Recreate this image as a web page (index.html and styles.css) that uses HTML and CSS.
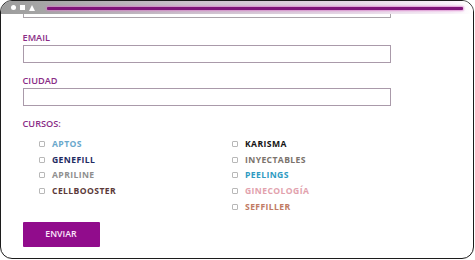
FILE: index.html
```html
<!DOCTYPE html>
<html lang="es">
<head>
<meta charset="utf-8">
<title>Formulario</title>
<link rel="stylesheet" href="styles.css">
</head>
<body>
<div class="frame">
  <div class="topbar">
    <div class="controls">
      <span class="dot"></span>
      <span class="sq"></span>
      <span class="tri"></span>
    </div>
    <div class="progress"></div>
  </div>
  <form class="form">
    <div class="cut-input"></div>
    <div class="field">
      <label class="label">EMAIL</label>
      <div class="input"></div>
    </div>
    <div class="field">
      <label class="label">CIUDAD</label>
      <div class="input"></div>
    </div>
    <div class="label cursos">CURSOS:</div>
    <div class="courses">
      <div class="col">
        <div class="course"><span class="box"></span><span class="c-aptos">APTOS</span></div>
        <div class="course"><span class="box"></span><span class="c-genefill">GENEFILL</span></div>
        <div class="course"><span class="box"></span><span class="c-apriline">APRILINE</span></div>
        <div class="course"><span class="box"></span><span class="c-cell">CELLBOOSTER</span></div>
      </div>
      <div class="col">
        <div class="course"><span class="box"></span><span class="c-karisma">KARISMA</span></div>
        <div class="course"><span class="box"></span><span class="c-iny">INYECTABLES</span></div>
        <div class="course"><span class="box"></span><span class="c-peel">PEELINGS</span></div>
        <div class="course"><span class="box"></span><span class="c-gine">GINECOLOGÍA</span></div>
        <div class="course"><span class="box"></span><span class="c-sef">SEFFILLER</span></div>
      </div>
    </div>
    <div class="button">ENVIAR</div>
  </form>
</div>
</body>
</html>
```

FILE: styles.css
```css
* { box-sizing: border-box; }
html, body { margin: 0; padding: 0; background: #ffffff; }
body { width: 475px; height: 260px; overflow: hidden; font-family: "Open Sans", "Liberation Sans", sans-serif; }

.frame {
  width: 474px;
  height: 259px;
  border: 1.5px solid #1c1c1c;
  border-radius: 12px;
  overflow: hidden;
  background: #fff;
  display: flex;
  flex-direction: column;
}

.topbar {
  height: 13px;
  flex: 0 0 13px;
  display: flex;
  align-items: center;
  background: linear-gradient(to right, #9c9c9c 0, #a6a6a6 45px, #cdc1cd 40%, #e6d8e6 75%, #f8f0f8 95%, #ffffff 100%);
}

.controls {
  display: flex;
  align-items: center;
  gap: 4px;
  padding-left: 10px;
  width: 46px;
}
.dot { width: 5px; height: 5px; border-radius: 50%; background: #fff; }
.sq { width: 5px; height: 5px; background: #fff; }
.tri {
  width: 0; height: 0;
  border-left: 3px solid transparent;
  border-right: 3px solid transparent;
  border-bottom: 6px solid #fff;
}

.progress {
  flex: 1;
  height: 3px;
  margin-right: 10px;
  margin-top: 1px;
  background: #7f1479;
  box-shadow: 0 0 2px 1px rgba(214, 120, 200, 0.75);
  border-radius: 1px;
}

.form {
  padding: 0 82px 0 21.5px;
  display: flex;
  flex-direction: column;
}

.cut-input {
  height: 4px;
  border: 1px solid #a9a4a9;
  border-top: none;
}

.field {
  display: flex;
  flex-direction: column;
  margin-top: 14px;
}
.field + .field { margin-top: 12px; }

.label {
  font-size: 9.2px;
  font-weight: 600;
  line-height: 12px;
  color: #8a2c86;
  margin-bottom: 1px;
}

.input {
  height: 18px;
  border: 1px solid #aa9aaa;
  background: #fff;
}

.cursos { margin-top: 12px; }

.courses {
  display: grid;
  grid-template-columns: 193px 193px;
  padding-left: 16.5px;
  margin-top: 5px;
}

.course {
  display: flex;
  align-items: center;
  height: 15.75px;
  font-size: 8.6px;
  font-weight: 700;
  letter-spacing: 0.4px;
}

.box {
  width: 6px;
  height: 6px;
  border: 1px solid #b8b8b8;
  border-radius: 1px;
  margin-right: 7px;
}

.c-aptos { color: #6aa8cc; }
.c-genefill { color: #1f2c63; }
.c-apriline { color: #8f8f8f; }
.c-cell { color: #5b3a3a; }
.c-karisma { color: #151515; }
.c-iny { color: #7b736c; }
.c-peel { color: #2f9bc2; }
.c-gine { color: #e2a2ad; }
.c-sef { color: #c17b64; }

.button {
  margin-top: 7px;
  width: 77px;
  height: 25px;
  background: #910c8c;
  border-radius: 1px;
  color: #fbe6fb;
  font-size: 8.8px;
  font-weight: 600;
  display: flex;
  align-items: center;
  justify-content: center;
}
```
